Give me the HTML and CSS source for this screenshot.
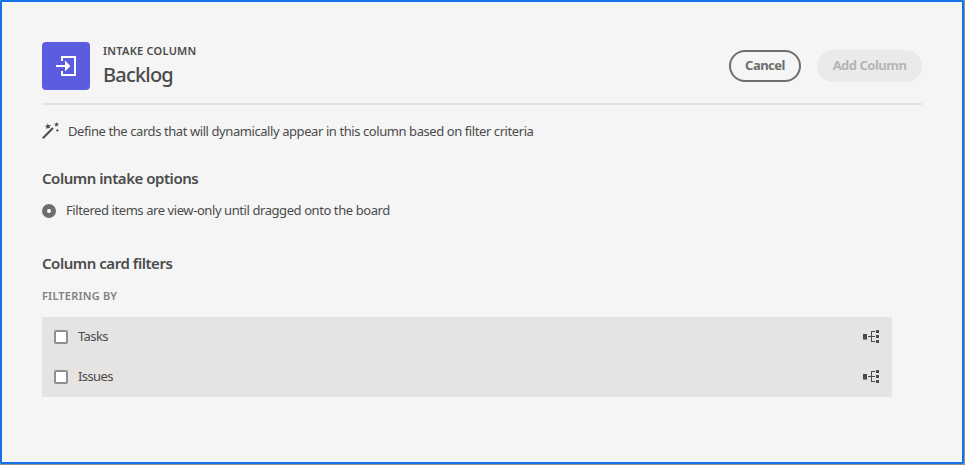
FILE: index.html
```html
<!DOCTYPE html>
<html lang="en">
<head>
<meta charset="utf-8">
<title>Intake column</title>
<link rel="stylesheet" href="styles.css">
</head>
<body>
<main class="dialog">
  <header class="header">
    <div class="badge">
      <svg width="48" height="48" viewBox="0 0 48 48" fill="none" stroke="#fff" stroke-width="2">
        <path d="M20 19V15H33V33H20V29"/>
        <path d="M14 24H25"/>
        <path d="M23 18.5L28.4 24L23 29.5Z" fill="#fff" stroke="none"/>
      </svg>
    </div>
    <div class="titles">
      <div class="eyebrow"><span>INTAKE COLUMN</span></div>
      <h1 class="title"><span>Backlog</span></h1>
    </div>
    <div class="actions">
      <button class="btn cancel"><span>Cancel</span></button>
      <button class="btn add" disabled><span>Add Column</span></button>
    </div>
  </header>
  <p class="intro">
    <svg width="18" height="18" viewBox="0 0 18 18" fill="#4b4b4b">
      <path d="M.8 16.2L11 6" stroke="#4b4b4b" stroke-width="2"/>
      <path d="M5.6 1.2L6.7 3.2L9.2 3L7.5 4.6L8.2 6.6L6.1 5.8L4.5 7.2L4.6 5.1L2.7 3.9L5 3.4Z"/>
      <path d="M14.7 0L15.2 1.6L17 1.8L15.6 2.8L16 4.6L14.4 3.7L12.9 4.5L13.4 2.9L12.3 1.6L14 1.5Z"/>
      <path d="M15.4 7L16.8 8.4L15.4 9.8L14 8.4Z"/>
    </svg>
    <span class="intro-text">Define the cards that will dynamically appear in this column based on filter criteria</span>
  </p>
  <h2 class="section intake"><span>Column intake options</span></h2>
  <label class="option"><i class="radio"></i><span class="option-text">Filtered items are view-only until dragged onto the board</span></label>
  <h2 class="section filters"><span>Column card filters</span></h2>
  <div class="caption"><span>FILTERING BY</span></div>
  <div class="list">
    <label class="row"><i class="check"></i><span class="name">Tasks</span>
      <svg class="tree" width="18" height="14" viewBox="0 0 18 14" fill="#4b4b4b"><path d="M1 5h4v5H1zM14 1h3v3h-3zM14 6h3v3h-3zM14 11h3v3h-3zM6 7h7v1H6zM9 2h4v1h-3v9h3v1H9z"/><path d="M1 10h4v1H1z" fill="#8c8c8c"/></svg>
    </label>
    <label class="row"><i class="check"></i><span class="name">Issues</span>
      <svg class="tree" width="18" height="14" viewBox="0 0 18 14" fill="#4b4b4b"><path d="M1 5h4v5H1zM14 1h3v3h-3zM14 6h3v3h-3zM14 11h3v3h-3zM6 7h7v1H6zM9 2h4v1h-3v9h3v1H9z"/><path d="M1 10h4v1H1z" fill="#8c8c8c"/></svg>
    </label>
  </div>
</main>
</body>
</html>
```
FILE: styles.css
```css
* { box-sizing: border-box; }
body {
  margin: 0;
  width: 965px;
  height: 465px;
  overflow: hidden;
  background: #8e9299;
  font-family: "Noto Sans", "Open Sans", sans-serif;
  color: #4b4b4b;
}
.dialog {
  width: 964px;
  height: 464px;
  padding: 40px;
  border: 2px solid #1473e6;
  background: linear-gradient(#f5f5f5, #f5f5f5) padding-box, #1473e6;
  border-radius: 2px;
}
.header {
  display: flex;
  align-items: flex-start;
  height: 63px;
  border-bottom: 2px solid #e1e1e1;
}
.badge {
  width: 48px;
  height: 48px;
  border-radius: 4px;
  background: #5c5ce0;
}
.badge svg { display: block; }
.titles { margin-left: 13px; white-space: nowrap; }
.eyebrow {
  font-size: 11px;
  line-height: 18px;
  font-weight: 600;
  letter-spacing: 0.25px;
}
.title {
  margin: 0;
  font-size: 20px;
  line-height: 30px;
  font-weight: 500;
  letter-spacing: -0.8px;
}
.actions {
  display: flex;
  gap: 16px;
  margin: 8px 0 0 auto;
}
.btn {
  height: 32px;
  padding: 0 0 2px;
  border: 0;
  border-radius: 16px;
  font: 700 13px/26px "Noto Sans", "Open Sans", sans-serif;
  letter-spacing: -0.5px;
  white-space: nowrap;
}
.cancel {
  width: 72px;
  border: 2px solid #6e6e6e;
  background: transparent;
  color: #6e6e6e;
}
.add {
  width: 105px;
  background: #eaeaea;
  color: #b5b5b5;
}
.intro {
  display: flex;
  align-items: center;
  gap: 8px;
  height: 20px;
  margin: 16px 0 0;
  font-size: 13px;
  white-space: nowrap;
}
.intro-text { letter-spacing: -0.42px; }
.section {
  margin: 0;
  font-size: 15px;
  line-height: 24px;
  font-weight: 600;
  letter-spacing: -0.46px;
}
.intake { margin-top: 25px; }
.option {
  display: flex;
  align-items: center;
  gap: 10px;
  height: 20px;
  margin-top: 10px;
  font-size: 13px;
}
.option-text { letter-spacing: -0.42px; }
.radio {
  width: 14px;
  height: 14px;
  margin-top: 2px;
  border: 5px solid #6e6e6e;
  border-radius: 50%;
  background: #fff;
}
.filters { margin-top: 31px; }
.caption {
  margin-top: 12px;
  font-size: 11px;
  line-height: 18px;
  font-weight: 600;
  letter-spacing: 0.2px;
  color: #808080;
}
.list {
  width: 850px;
  margin-top: 12px;
  background: #e5e4e2;
}
.row {
  display: flex;
  align-items: center;
  height: 40px;
  padding: 0 12px;
  font-size: 13px;
  letter-spacing: -0.6px;
}
.name { padding-bottom: 2px; }
.check {
  width: 14px;
  height: 14px;
  margin-right: 10px;
  border: 2px solid #909090;
  border-radius: 2px;
  background: #fff;
}
.tree {
  margin-left: auto;
  margin-bottom: 2px;
}
```
